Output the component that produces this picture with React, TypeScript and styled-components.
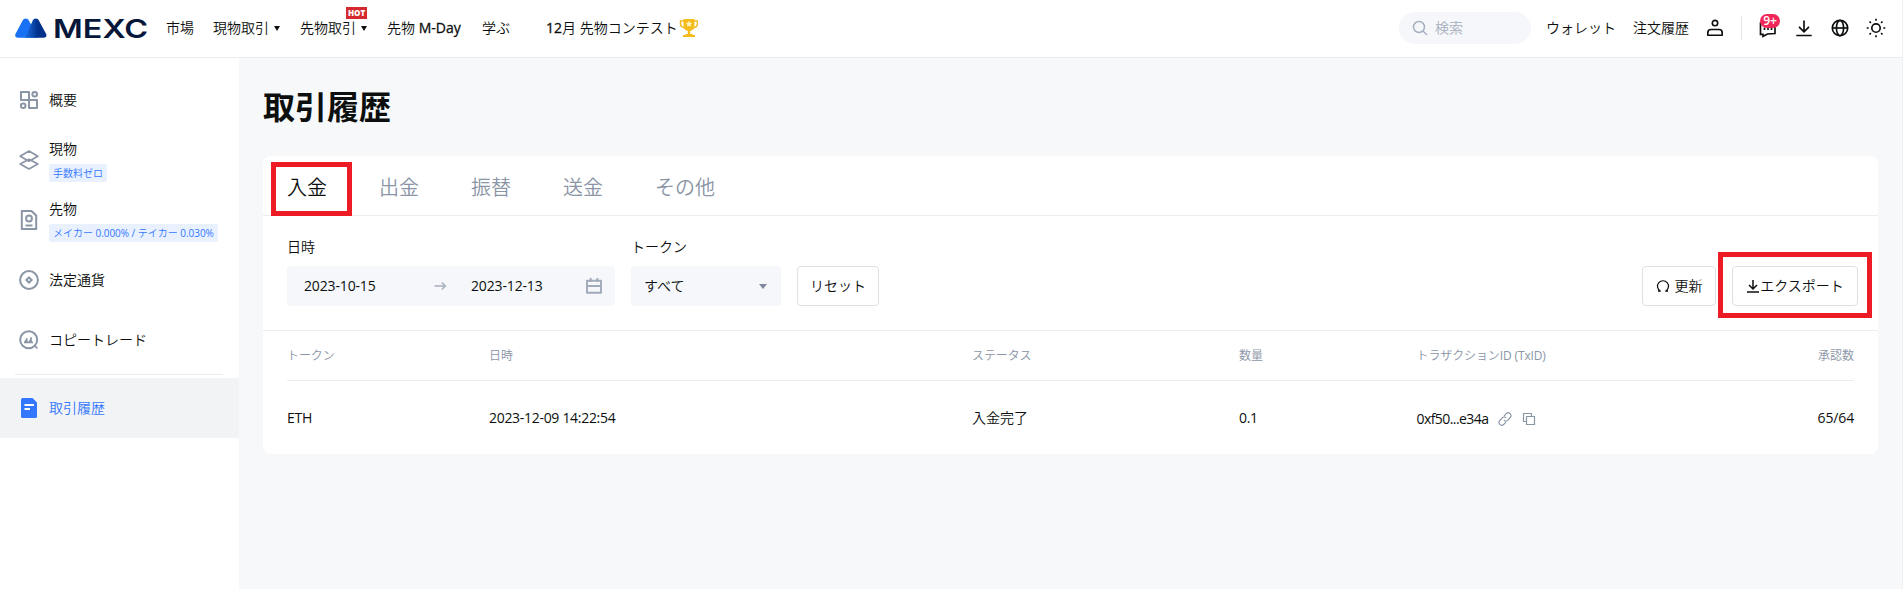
import React from "react";
import styled, { createGlobalStyle } from "styled-components";

const Global = createGlobalStyle`
  * { box-sizing: border-box; }
  body {
    margin: 0;
    background: #f7f8fa;
    color: #0c0f0e;
    font: 14px/20px "Open Sans", "Noto Sans CJK JP DemiLight", "Noto Sans CJK JP", sans-serif;
    overflow: hidden;
  }
`;

const Page = styled.div`
  display: flex;
  flex-direction: column;
  width: 1903px;
  height: 589px;
  border-right: 1px solid #f0f0f0;
`;

const Header = styled.header`
  display: flex;
  align-items: center;
  flex: none;
  height: 58px;
  padding: 0 16px 1px 15px;
  background: #fff;
  border-bottom: 1px solid #ececec;
  white-space: nowrap;
`;

const LogoSvg = styled.svg`
  display: block;
  width: 136px;
  height: 32px;
  margin-right: 15px;
`;

const NavItem = styled.a<{ $width: number; $gap: number }>`
  position: relative;
  display: flex;
  align-items: center;
  flex: none;
  width: ${(p) => p.$width}px;
  margin-right: ${(p) => p.$gap}px;
`;

const Strong = styled.span`
  -webkit-text-stroke: 0.3px currentColor;
  white-space: pre;
`;

const Caret = styled.i<{ $color?: string; $size?: number }>`
  flex: none;
  border: ${(p) => p.$size ?? 3.5}px solid transparent;
  border-top: 5px solid ${(p) => p.$color ?? "#0c0f0e"};
  border-bottom: 0;
  margin-left: 5px;
`;

const HotBadge = styled.span`
  position: absolute;
  left: 46px;
  top: -11px;
  width: 21px;
  height: 12px;
  background: #d4292f;
  color: #fff;
  font: 800 8px/12px "Open Sans", sans-serif;
  text-align: center;
`;

const Spacer = styled.div`
  flex: 1;
`;

const Search = styled.div`
  display: flex;
  align-items: center;
  gap: 7px;
  width: 132px;
  height: 32px;
  padding-left: 13px;
  margin-right: 15px;
  border-radius: 16px;
  background: #f5f7fa;
  color: #a7b0bf;
`;

const HeaderIcon = styled.svg<{ $gap?: number }>`
  flex: none;
  width: 20px;
  height: 20px;
  margin-right: ${(p) => p.$gap ?? 0}px;
  fill: none;
  stroke: #0c0f0e;
  stroke-width: 1.65;
`;

const Divider = styled.i`
  width: 1px;
  height: 24px;
  margin-right: 16px;
  background: #e8e8ea;
`;

const Messages = styled.div`
  position: relative;
  display: flex;
`;

const Count = styled.span`
  position: absolute;
  left: 2px;
  top: -4px;
  width: 20px;
  height: 14px;
  border-radius: 7px;
  background: #f0285a;
  color: #fff;
  font: 600 12px/14px "Open Sans", sans-serif;
  text-align: center;
`;

const Body = styled.div`
  display: flex;
  flex: 1;
`;

const Sidebar = styled.aside`
  width: 239px;
  flex: none;
  padding-top: 12px;
  background: #fff;
`;

const SideItem = styled.a<{ $active?: boolean }>`
  display: flex;
  align-items: center;
  gap: 10px;
  height: 60px;
  padding-left: 19px;
  background: ${(p) => (p.$active ? "#f2f3f5" : "none")};
  color: ${(p) => (p.$active ? "#3377ff" : "inherit")};
`;

const SideIcon = styled.svg`
  width: 20px;
  height: 20px;
  flex: none;
  fill: none;
  stroke: #8a95a6;
  stroke-width: 2;
`;

const SideText = styled.div`
  display: flex;
  flex-direction: column;
  align-items: flex-start;
  white-space: nowrap;
`;

const Tag = styled.span`
  height: 18px;
  margin: 5px 0 -1px;
  padding: 0 4px;
  border-radius: 2px;
  background: #e9f1ff;
  color: #3377ff;
  font-size: 10px;
  line-height: 18px;
  letter-spacing: -0.03px;
`;

const SideRule = styled.div`
  height: 1px;
  margin: 4px 16px 3px 15px;
  background: #ebecee;
`;

const Main = styled.main`
  flex: 1;
  padding: 25px 24px 0;
`;

const Title = styled.h1`
  margin: 0 0 25px;
  font-family: "Open Sans", "Noto Sans CJK JP", sans-serif;
  font-size: 32px;
  line-height: 48px;
  font-weight: 700;
`;

const Card = styled.section`
  height: 298px;
  border-radius: 8px;
  background: #fff;
`;

const Tabs = styled.nav`
  display: flex;
  align-items: center;
  gap: 52px;
  height: 60px;
  padding: 4px 24px 0;
  border-bottom: 1px solid #ebecef;
`;

const Tab = styled.a<{ $active?: boolean }>`
  position: relative;
  font-size: 20px;
  line-height: 30px;
  color: ${(p) => (p.$active ? "#0c0f0e" : "#8a95a6")};
`;

const Highlight = styled.i<{ $left: number; $top: number; $w: number; $h: number }>`
  position: absolute;
  left: ${(p) => p.$left}px;
  top: ${(p) => p.$top}px;
  width: ${(p) => p.$w}px;
  height: ${(p) => p.$h}px;
  border: 5px solid #ed1c24;
`;

const Filters = styled.div`
  display: flex;
  align-items: flex-end;
  height: 115px;
  padding: 0 20px 24px 24px;
  border-bottom: 1px solid #ebecef;
`;

const Field = styled.div<{ $width: number }>`
  display: flex;
  flex-direction: column;
  gap: 9px;
  width: ${(p) => p.$width}px;
  margin-right: 16px;
`;

const Control = styled.div<{ $pad: string }>`
  display: flex;
  align-items: center;
  height: 40px;
  padding: ${(p) => p.$pad};
  border-radius: 4px;
  background: #f5f7fa;
`;

const DateText = styled.span<{ $width: number }>`
  width: ${(p) => p.$width}px;
  letter-spacing: -0.15px;
`;

const SmallIcon = styled.svg<{ $size: number; $color?: string }>`
  flex: none;
  width: ${(p) => p.$size}px;
  height: ${(p) => p.$size}px;
  fill: none;
  stroke: ${(p) => p.$color ?? "#0c0f0e"};
  stroke-width: 1.5;
`;

const Button = styled.button<{ $width: number; $gap?: number }>`
  position: relative;
  display: flex;
  align-items: center;
  justify-content: center;
  gap: ${(p) => p.$gap ?? 0}px;
  width: ${(p) => p.$width}px;
  height: 40px;
  padding: 0;
  border: 1px solid #dfe0e2;
  border-radius: 4px;
  background: #fff;
  color: inherit;
  font: inherit;
  white-space: nowrap;
`;

const Actions = styled.div`
  display: flex;
  gap: 16px;
`;

const Row = styled.div<{ $head?: boolean }>`
  display: grid;
  grid-template-columns: 202px 483px 267px 177.5px 1fr;
  align-items: center;
  height: ${(p) => (p.$head ? 50 : 73)}px;
  margin: 0 24px;
  border-bottom: ${(p) => (p.$head ? "1px solid #ebecef" : "0")};
  color: ${(p) => (p.$head ? "#8a95a6" : "inherit")};
  font-size: ${(p) => (p.$head ? 12 : 14)}px;
  letter-spacing: ${(p) => (p.$head ? -0.12 : -0.3)}px;
`;

const LastCells = styled.div`
  display: flex;
  justify-content: space-between;
  align-items: center;
`;

const Tx = styled.span`
  display: flex;
  align-items: center;
  gap: 10px;
  padding-top: 2px;
  letter-spacing: -0.57px;
`;

const Wide = styled.span`
  letter-spacing: 0;
`;

const Count64 = styled.span`
  letter-spacing: -0.15px;
`;

const Logo = () => (
  <LogoSvg viewBox="0 0 136 32">
    <defs>
      <linearGradient id="peak" x1="0" x2="1">
        <stop offset="0" stopColor="#1b6fe4" />
        <stop offset="0.6" stopColor="#02318b" />
      </linearGradient>
    </defs>
    <path d="M3 25.700C.2 25.700-.4 23.500.7 21.500L7.500 8.800c1.500-3 5-3 6.500 0L23 25.700z" fill="#1972f5" />
    <path d="M10 25.700 17.500 9c1.500-3.200 5-3.200 6.600 0l6.800 12.600c1.300 2.300.3 4.100-2.100 4.100z" fill="url(#peak)" />
    <text x="38" y="25.500" textLength="95" lengthAdjust="spacingAndGlyphs" fontFamily="Inter, sans-serif" fontWeight="600" fontSize="26" fill="#07173a">MEXC</text>
  </LogoSvg>
);

const Trophy = () => (
  <svg width="20" height="20" viewBox="-1 0 20 20">
    <path d="M5 3H1.500v2.500c0 2.500 1.500 4 4.500 4.300M15 3h3.500v2.500c0 2.500-1.500 4-4.500 4.300" fill="none" stroke="#f2b91f" strokeWidth="1.500" />
    <path d="M4.500 1h11v6.500c0 3-1.500 5-4.300 5.500v3h2.300v1H16v2H4v-2h2.500v-1h2.300v-3C6 12.500 4.500 10.500 4.500 7.500z" fill="#f5bd1c" />
    <path d="m10 2.800 1 2 2.100.3-1.500 1.500.3 2.100-1.900-1-1.900 1 .3-2.100L6.900 5.100 9 4.800z" fill="#fff3c4" />
  </svg>
);

const Download = () => <path d="M10 2.500v11M5 8.800l5 5 5-5M2.300 17.500h15.400" />;

export default function App() {
  return (
    <>
      <Global />
      <Page>
        <Header>
          <Logo />
          <NavItem $width={28} $gap={19}>市場</NavItem>
          <NavItem $width={68} $gap={19}>現物取引<Caret /></NavItem>
          <NavItem $width={68} $gap={19}>先物取引<Caret /><HotBadge>HOT</HotBadge></NavItem>
          <NavItem $width={76} $gap={19}>先物<Strong> M-Day</Strong></NavItem>
          <NavItem $width={28} $gap={36}>学ぶ</NavItem>
          <NavItem $width={155} $gap={0}><Strong>12</Strong>月&nbsp;先物コンテスト<Trophy /></NavItem>
          <Spacer />
          <Search>
            <SmallIcon $size={16} $color="#a7b0bf" viewBox="0 0 16 16"><circle cx="7" cy="7" r="5.500" /><path d="m11 11 4 4" /></SmallIcon>
            検索
          </Search>
          <NavItem $width={70} $gap={17}>ウォレット</NavItem>
          <NavItem $width={56} $gap={16}>注文履歴</NavItem>
          <HeaderIcon $gap={16} viewBox="0 0 20 20"><circle cx="10" cy="5" r="2.700" /><path d="M2.800 17.200v-2.400c0-2 1.200-3.300 3.200-3.300h8c2 0 3.200 1.300 3.200 3.300v2.400z" strokeLinejoin="round" /></HeaderIcon>
          <Divider />
          <Messages>
            <HeaderIcon $gap={16} viewBox="0 0 20 20"><path d="M4 5H2.500v11.300H5v2L9.500 16l7.500-.5V8M6.500 9.500v2.500M10 9.500v2.500M13.500 9.500v2.500" /></HeaderIcon>
            <Count>9+</Count>
          </Messages>
          <HeaderIcon $gap={16} viewBox="0 0 20 20"><Download /></HeaderIcon>
          <HeaderIcon $gap={16} viewBox="0 0 20 20"><circle cx="10" cy="10" r="7.700" /><ellipse cx="10" cy="10" rx="3.600" ry="7.700" /><path d="M2.500 10h15" /></HeaderIcon>
          <HeaderIcon viewBox="0 0 20 20"><circle cx="10" cy="10" r="4.200" /><path d="M10 .7v2M10 17.300v2M.7 10h2M17.300 10h2M3.500 3.500l1.400 1.400M15.100 15.100l1.400 1.400M3.500 16.500l1.400-1.400M15.100 4.900l1.400-1.400" /></HeaderIcon>
        </Header>
        <Body>
          <Sidebar>
            <SideItem>
              <SideIcon viewBox="0 0 20 20"><path d="M10 10H2V2h8zM10 10h8v8h-8z" strokeLinejoin="round" /><circle cx="15.700" cy="4.200" r="2.300" /><circle cx="4.200" cy="15.800" r="2.300" /></SideIcon>
              <SideText>概要</SideText>
            </SideItem>
            <SideItem>
              <SideIcon viewBox="0 0 20 20"><path d="m10 1 8.800 5.200L10 11.300 1.200 6.200zM10 9.300l8.800 4.700L10 19l-8.800-5z" strokeLinejoin="round" strokeWidth="1.700" /></SideIcon>
              <SideText>現物<Tag>手数料ゼロ</Tag></SideText>
            </SideItem>
            <SideItem>
              <SideIcon viewBox="0 0 20 20"><path d="M2.800 1h9.700l4.700 4.500V19H2.800zM6.500 15.500h7" strokeLinejoin="round" /><circle cx="10" cy="8.500" r="2.900" /></SideIcon>
              <SideText>先物<Tag>メイカー 0.000% / テイカー 0.030%</Tag></SideText>
            </SideItem>
            <SideItem>
              <SideIcon viewBox="0 0 20 20"><circle cx="10" cy="10" r="8.900" /><path d="m10 7.400 2.600 2.600-2.600 2.600L7.400 10z" /></SideIcon>
              <SideText>法定通貨</SideText>
            </SideItem>
            <SideItem>
              <SideIcon viewBox="0 0 20 20"><circle cx="9.700" cy="9.700" r="8.500" /><path d="m15.500 15.500 3 3M5 12.300h9M7.700 12V8.200M12 12V7.200M6 12l1.700-2.500M10.200 12l1.800-2.500" strokeWidth="1.700" /></SideIcon>
              <SideText>コピートレード</SideText>
            </SideItem>
            <SideRule />
            <SideItem $active>
              <SideIcon viewBox="0 0 20 20"><path d="M3.500 0h10l4.500 4.500V18.500a1.500 1.500 0 0 1-1.500 1.500h-13A1.500 1.500 0 0 1 2 18.500v-17A1.500 1.500 0 0 1 3.500 0z" fill="#3377ff" stroke="none" /><path d="M5.500 7h9.500M5.500 11H11" stroke="#fff" strokeWidth="1.800" /></SideIcon>
              <SideText>取引履歴</SideText>
            </SideItem>
          </Sidebar>
          <Main>
            <Title>取引履歴</Title>
            <Card>
              <Tabs>
                <Tab $active>入金<Highlight $left={-16} $top={-11} $w={81} $h={54} /></Tab>
                <Tab>出金</Tab>
                <Tab>振替</Tab>
                <Tab>送金</Tab>
                <Tab>その他</Tab>
              </Tabs>
              <Filters>
                <Field $width={328}>
                  日時
                  <Control $pad="0 13px 0 17px">
                    <DateText $width={128}>2023-10-15</DateText>
                    <SmallIcon $size={16} $color="#a7b0bf" viewBox="0 0 16 16"><path d="M2.500 8h11M9.800 4.500 13.300 8l-3.500 3.500" /></SmallIcon>
                    <Spacer />
                    <DateText $width={115}>2023-12-13</DateText>
                    <SmallIcon $size={16} $color="#a0aaba" viewBox="0 0 16 16"><path d="M1 2.800h14v12H1zM1 8h14M4.700 0v4M11.300 0v4" strokeWidth="1.900" strokeLinejoin="round" /></SmallIcon>
                  </Control>
                </Field>
                <Field $width={150}>
                  トークン
                  <Control $pad="0 14px 0 13px">
                    すべて
                    <Spacer />
                    <Caret $color="#7d889b" $size={4.500} />
                  </Control>
                </Field>
                <Button $width={82}>リセット</Button>
                <Spacer />
                <Actions>
                  <Button $width={74} $gap={5}>
                    <SmallIcon $size={14} viewBox="0 0 14 14"><path d="M4.200 12A5.500 5.500 0 1 1 9.800 12M2 12.200h2.800M9.200 12.200H12" strokeWidth="1.200" /></SmallIcon>
                    更新
                  </Button>
                  <Button $width={126}>
                    <SmallIcon $size={14} viewBox="0 0 14 14"><path d="M7 1v8.500M3 6l4 4 4-4M1 13h12" strokeWidth="1.500" /></SmallIcon>
                    エクスポート
                    <Highlight $left={-15} $top={-15} $w={154} $h={66} />
                  </Button>
                </Actions>
              </Filters>
              <Row $head>
                <span>トークン</span>
                <span>日時</span>
                <span>ステータス</span>
                <span>数量</span>
                <LastCells><span>トラザクションID (TxID)</span><Wide>承認数</Wide></LastCells>
              </Row>
              <Row>
                <span>ETH</span>
                <span>2023-12-09 14:22:54</span>
                <Wide>入金完了</Wide>
                <span>0.1</span>
                <LastCells>
                  <Tx>
                    0xf50...e34a
                    <SmallIcon $size={14} $color="#8a95a6" viewBox="0 0 14 14"><path d="m6 4 2.200-2.300a2.600 2.600 0 0 1 4 3.800L9.600 8.300a2.600 2.600 0 0 1-3.700-.1M8 10l-2.200 2.300a2.600 2.600 0 0 1-4-3.800L4.400 5.700a2.600 2.600 0 0 1 3.700.1" strokeWidth="1.100" /></SmallIcon>
                    <SmallIcon $size={14} $color="#8a95a6" viewBox="0 0 14 14"><path d="M4.500 4.500h8v8h-8zM4.500 9.500h-3v-8h8v3" strokeWidth="1.200" strokeLinejoin="round" /></SmallIcon>
                  </Tx>
                  <Count64>65/64</Count64>
                </LastCells>
              </Row>
            </Card>
          </Main>
        </Body>
      </Page>
    </>
  );
}
